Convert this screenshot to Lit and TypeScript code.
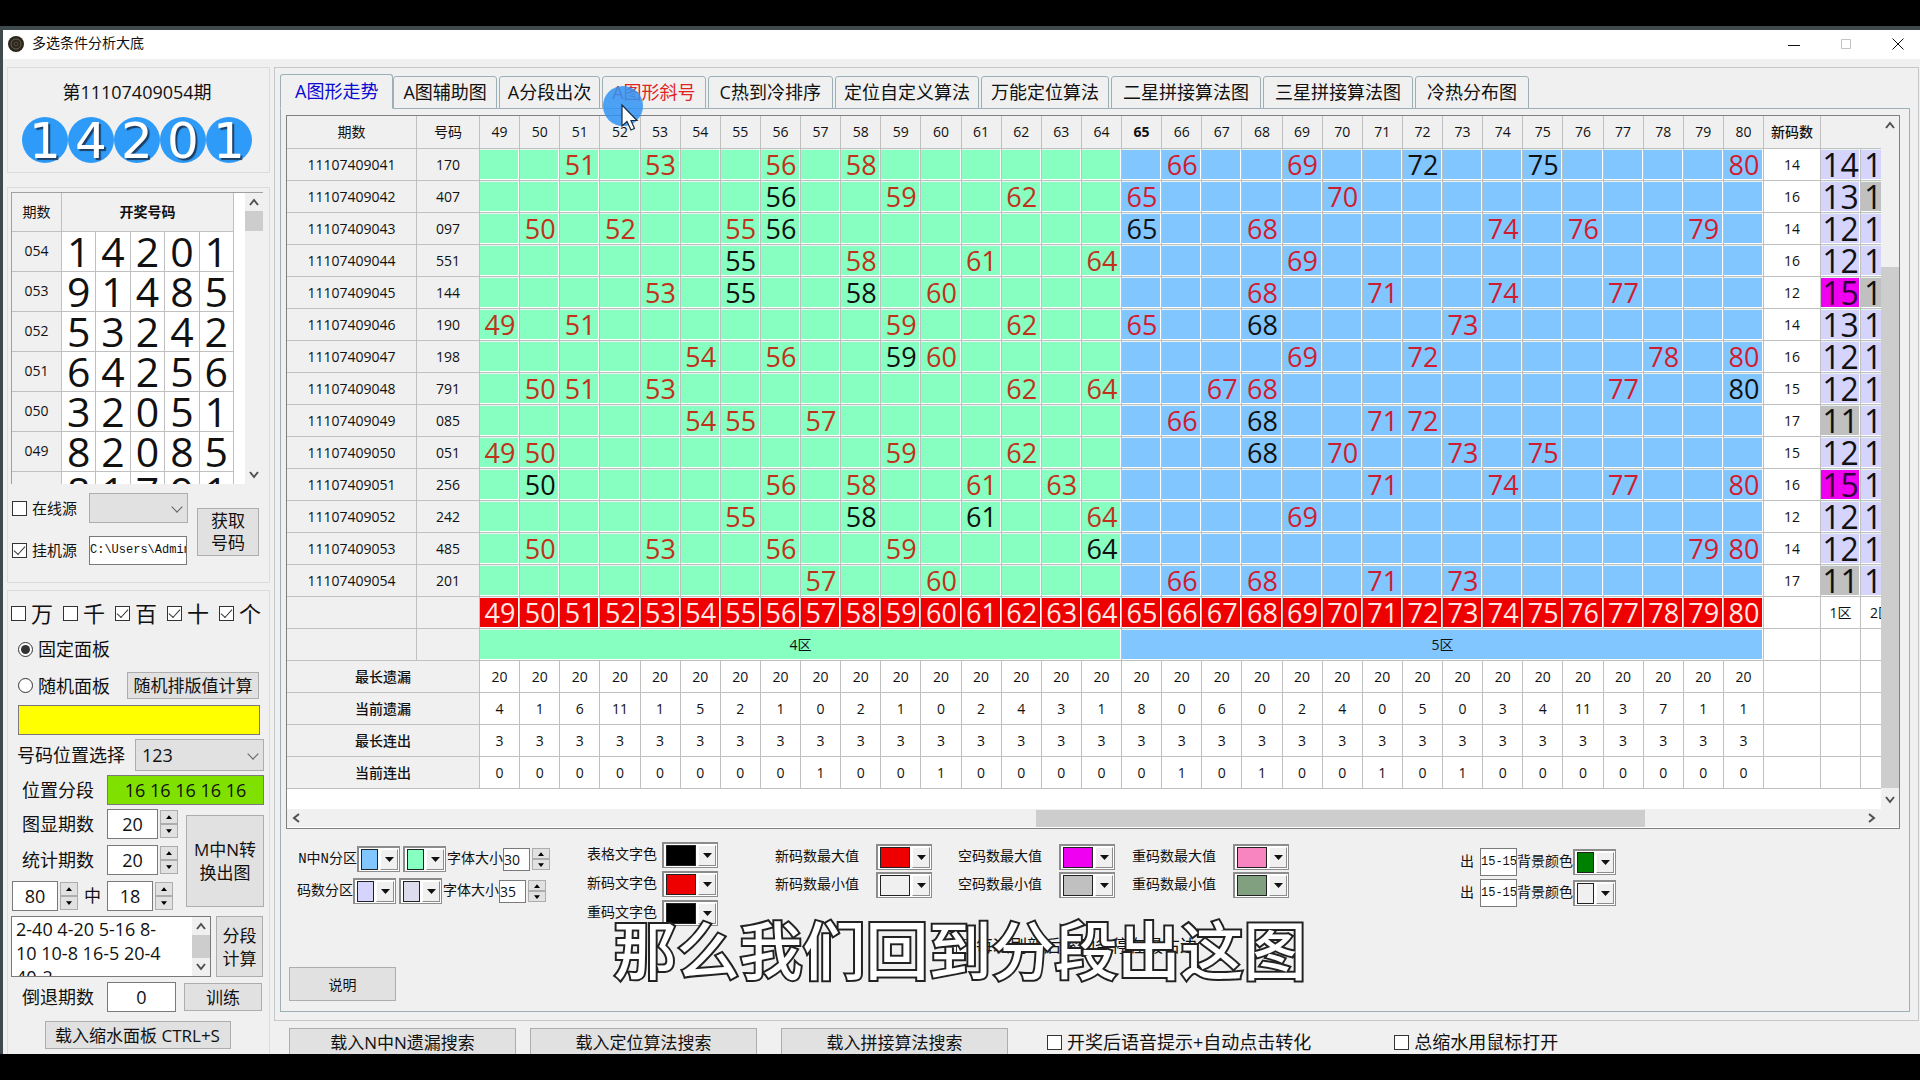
import { LitElement, html, css, svg, nothing } from "lit";
import { customElement } from "lit/decorators.js";

type Row = { id: string; code: string; hit: number[]; repeat: number[]; fresh: number; z1: number; z2low?: boolean };

const FIRST = 49;
const COLUMNS = Array.from({ length: 32 }, (_, i) => FIRST + i);

const ROWS: Row[] = [
  { id: "11107409041", code: "170", hit: [51, 53, 56, 58, 66, 69, 80], repeat: [72, 75], fresh: 14, z1: 14 },
  { id: "11107409042", code: "407", hit: [59, 62, 65, 70], repeat: [56], fresh: 16, z1: 13, z2low: true },
  { id: "11107409043", code: "097", hit: [50, 52, 55, 68, 74, 76, 79], repeat: [56, 65], fresh: 14, z1: 12 },
  { id: "11107409044", code: "551", hit: [58, 61, 64, 69], repeat: [55], fresh: 16, z1: 12 },
  { id: "11107409045", code: "144", hit: [53, 60, 68, 71, 74, 77], repeat: [55, 58], fresh: 12, z1: 15, z2low: true },
  { id: "11107409046", code: "190", hit: [49, 51, 59, 62, 65, 73], repeat: [68], fresh: 14, z1: 13 },
  { id: "11107409047", code: "198", hit: [54, 56, 60, 69, 72, 78, 80], repeat: [59], fresh: 16, z1: 12 },
  { id: "11107409048", code: "791", hit: [50, 51, 53, 62, 64, 67, 68, 77], repeat: [80], fresh: 15, z1: 12 },
  { id: "11107409049", code: "085", hit: [54, 55, 57, 66, 71, 72], repeat: [68], fresh: 17, z1: 11 },
  { id: "11107409050", code: "051", hit: [49, 50, 59, 62, 70, 73, 75], repeat: [68], fresh: 15, z1: 12 },
  { id: "11107409051", code: "256", hit: [56, 58, 61, 63, 71, 74, 77, 80], repeat: [50], fresh: 16, z1: 15 },
  { id: "11107409052", code: "242", hit: [55, 64, 69], repeat: [58, 61], fresh: 12, z1: 12 },
  { id: "11107409053", code: "485", hit: [50, 53, 56, 59, 79, 80], repeat: [64], fresh: 14, z1: 12 },
  { id: "11107409054", code: "201", hit: [57, 60, 66, 68, 71, 73], repeat: [], fresh: 17, z1: 11 },
];

const STATS: [string, number[]][] = [
  ["最长遗漏", COLUMNS.map(() => 20)],
  ["当前遗漏", [4, 1, 6, 11, 1, 5, 2, 1, 0, 2, 1, 0, 2, 4, 3, 1, 8, 0, 6, 0, 2, 4, 0, 5, 0, 3, 4, 11, 3, 7, 1, 1]],
  ["最长连出", COLUMNS.map(() => 3)],
  ["当前连出", COLUMNS.map((n) => ([57, 60, 66, 68, 71, 73].includes(n) ? 1 : 0))],
];

const HISTORY: [string, string][] = [
  ["054", "14201"],
  ["053", "91485"],
  ["052", "53242"],
  ["051", "64256"],
  ["050", "32051"],
  ["049", "82085"],
  ["048", "81791"],
];

const TABS: [string, string][] = [
  ["A图形走势", "on"],
  ["A图辅助图", ""],
  ["A分段出次", "snug"],
  ["A图形斜号", "hot"],
  ["C热到冷排序", "roomy"],
  ["定位自定义算法", "snug"],
  ["万能定位算法", ""],
  ["二星拼接算法图", "roomy"],
  ["三星拼接算法图", "roomy"],
  ["冷热分布图", "roomy"],
];

const LIMITS: [string, string, string][][] = [
  [["new-max", "新码数最大值", "#ee0000"], ["new-min", "新码数最小值", "#f0f0f0"]],
  [["gap-max", "空码数最大值", "#f000f0"], ["gap-min", "空码数最小值", "#c0c0c0"]],
  [["rep-max", "重码数最大值", "#f884c0"], ["rep-min", "重码数最小值", "#80a080"]],
];

const CHEVRONS: Record<string, string> = {
  up: "M4 11 L8 6 L12 11",
  down: "M4 5 L8 10 L12 5",
  left: "M10 4 L5 8 L10 12",
  right: "M6 4 L11 8 L6 12",
};

const chevron = (dir: string) => html`
  <svg class="chev" viewBox="0 0 16 16" aria-hidden="true">${svg`<path d=${CHEVRONS[dir]} />`}</svg>
`;

const spin = (name: string) => html`
  <span class="spin">
    <button aria-label="${name} 增加"><svg viewBox="0 0 8 5"><path d="M4 0 L8 5 H0 Z" /></svg></button>
    <button aria-label="${name} 减少"><svg viewBox="0 0 8 5"><path d="M0 0 H8 L4 5 Z" /></svg></button>
  </span>
`;

const colour = (id: string, value: string, name: string, wide = false) => html`
  <span class="colour ${wide ? "wide" : ""}">
    <span class="swatch" style="background:${value}"></span>
    <select id=${id} aria-label=${name}><option></option></select>
  </span>
`;

@customElement("app-root")
export class AppRoot extends LitElement {
  static styles = css`
    :host {
      display: flex;
      flex-direction: column;
      position: relative;
      height: 100vh;
      padding: 26px 0;
      overflow: hidden;
      box-sizing: border-box;
      background: #000;
      color: #111;
      font: 18px/24px "Open Sans", "Noto Sans CJK SC", sans-serif;
    }
    * { box-sizing: border-box; }
    button, input, select, textarea { font: inherit; color: inherit; margin: 0; border-radius: 0; }
    button { background: #e1e1e1; border: 1px solid #adadad; padding: 0; line-height: 23px; white-space: nowrap; }
    input, textarea { background: #fff; border: 1px solid #7a7a7a; padding: 0; outline: 0; min-width: 0; }

    .desktop { flex: 1; min-height: 0; background: #3f4a4e; padding: 4px 0 0 3px; display: flex; }
    .window { flex: 1; min-width: 0; background: #f0f0f0; display: flex; flex-direction: column; overflow: hidden; }
    .title { flex: none; height: 29px; background: #fff; display: flex; align-items: center; padding: 0 0 2px 5px; gap: 8px; font-size: 14px; }
    .title h1 { font: inherit; margin: 0; flex: 1; padding-bottom: 1px; }
    .logo { width: 16px; height: 16px; }
    .winbtn { background: none; border: 0; width: 44px; height: 24px; display: grid; place-items: center; }
    .winbtn svg { width: 12px; height: 12px; fill: none; stroke: #111; }
    .winbtn.off svg { stroke: #c4c4c4; }

    .body { flex: 1; min-height: 0; display: grid; grid-template-columns: 263px minmax(0, 1fr); gap: 4px; padding: 8px 1px 0 4px; }
    .side { display: flex; flex-direction: column; }
    .box { border: 1px solid #dcdcdc; }

    .draw { height: 106px; margin-bottom: 14px; padding: 13px 3px 0 0; text-align: center; }
    .draw p { margin: 0 0 13px; line-height: 23px; }
    .balls { display: flex; justify-content: center; }
    .ball { width: 46px; height: 46px; border-radius: 50%; background: #2f9bf8; color: #fff; font: 50px/48px "DejaVu Sans", sans-serif; text-shadow: 2px 2px 1px #1c3f66; }

    .source { height: 396px; margin-bottom: 7px; padding: 4px 3px; }
    .history { height: 292px; margin-right: 3px; border: 1px solid #a0a0a0; border-width: 1px 0 0 1px; background: #fff; display: flex; justify-content: space-between; overflow: hidden; }
    table { border-collapse: separate; border-spacing: 0; table-layout: fixed; }
    th, td { padding: 0; text-align: center; font-weight: 400; border: 1px solid #c0c0c0; border-width: 0 1px 1px 0; white-space: nowrap; }
    th { background: #f0f0f0; }
    .history table { width: 222px; font-size: 14px; }
    .history .idcol { width: 50px; }
    .history thead th { height: 39px; }
    .history .bold { font-weight: 700; }
    .history tbody th, .history td { height: 40px; }
    .history tbody th { padding-bottom: 2px; }
    .history td { font-size: 41px; line-height: 39px; }

    .bar { background: #f0f0f0; display: flex; flex-direction: column; align-items: center; width: 18px; }
    .bar.flat { flex-direction: row; width: auto; height: 18px; }
    .chev { width: 16px; height: 18px; fill: none; stroke: #505050; stroke-width: 2; flex: none; }
    .thumb { background: #cdcdcd; width: 18px; }
    .bar.flat .thumb { height: 17px; }

    .feed { display: grid; grid-template-columns: 77px 98px 62px; grid-template-rows: 30px 30px; row-gap: 12px; padding: 9px 0 0 1px; align-items: center; }
    .feed button { grid-area: 1 / 3 / 3 / 4; justify-self: end; width: 62px; height: 48px; margin-top: 6px; margin-right: -10px; white-space: normal; line-height: 22px; font-size: 17px; padding: 0 12px; }
    .feed label { font-size: 15px; }
    .feed .path { font: 12px/28px "Liberation Mono", monospace; height: 29px; width: 98px; }
    .tick { display: flex; align-items: center; gap: 5px; white-space: nowrap; }
    .tick input { appearance: none; width: 15px; height: 15px; flex: none; border: 1px solid #333; background: #fff; display: grid; place-items: center; }
    .tick input[type="radio"] { border-radius: 50%; }
    .tick input[type="checkbox"]:checked::before { content: ""; width: 10px; height: 5px; margin-top: -3px; border: solid #333; border-width: 0 0 1px 1px; transform: rotate(-48deg); }
    .tick input[type="radio"]:checked::before { content: ""; width: 9px; height: 9px; border-radius: 50%; background: #333; }

    .drop { position: relative; display: block; }
    .drop select { appearance: none; width: 100%; height: 100%; background: #e1e1e1; border: 1px solid #adadad; padding: 0 6px; display: block; }
    .drop::after { content: ""; position: absolute; right: 7px; top: 50%; width: 7px; height: 7px; margin-top: -5px; border: solid #606060; border-width: 0 1px 1px 0; transform: rotate(45deg); pointer-events: none; }
    .feed .drop { width: 99px; height: 30px; }

    .panel { flex: 1 0 auto; padding: 7px 5px 0 3px; display: flex; flex-direction: column; }
    .digits { display: grid; grid-template-columns: repeat(5, 52px); height: 30px; font-size: 22px; }
    .mode { padding-left: 7px; margin-top: 9px; height: 24px; }
    .line { display: flex; align-items: center; }
    .modeline { margin-top: 11px; height: 27px; padding-left: 7px; justify-content: space-between; padding-right: 5px; }
    .modeline button { width: 132px; height: 27px; font-size: 17px; }
    .yellow { background: #ff0; height: 30px; margin: 6px 4px 0 7px; }
    .pos { margin-top: 4px; height: 32px; padding-left: 6px; gap: 10px; }
    .pos .drop { flex: 1; height: 32px; }
    .field { height: 30px; }
    .field > label { width: 96px; padding-left: 11px; flex: none; white-space: nowrap; }
    .seg { margin-top: 4px; }
    .seg input { flex: 1; height: 30px; background: #80e000; text-align: center; }
    .counts { display: flex; justify-content: space-between; margin-top: 4px; }
    .counts > div { display: grid; gap: 6px; }
    .counts > button { width: 78px; height: 92px; margin-top: 6px; line-height: 23px; font-size: 17px; }
    .num { width: 51px; height: 30px; text-align: center; }
    .pair .num { width: 46px; }
    .pair { padding-left: 1px; }
    .field > .mid { width: 29px; padding: 0; text-align: center; font-size: 17px; }
    .spin { display: grid; grid-template-rows: 1fr 1fr; width: 18px; height: 28px; margin-left: 2px; }
    .spin button { display: grid; place-items: center; min-height: 0; }
    .spin svg { width: 6px; height: 4px; }
    .segments { display: flex; justify-content: space-between; margin-top: 5px; height: 61px; padding-right: 1px; }
    .memo { width: 200px; border: 1px solid #7a7a7a; display: flex; background: #fff; }
    .memo textarea { flex: 1; border: 0; resize: none; overflow: hidden; padding: 0 0 0 4px; height: 100%; white-space: pre; font-size: 18px; line-height: 24px; }
    .segments button { width: 47px; line-height: 23px; font-size: 17px; }
    .back { margin-top: 5px; }
    .back .num { width: 69px; }
    .back button { width: 78px; height: 28px; margin-left: 8px; font-size: 17px; }
    .load { align-self: center; width: 186px; height: 28px; margin-top: 9px; font-size: 17px; }

    .main { min-width: 0; display: flex; flex-direction: column; }
    .outer { height: 954px; flex: none; border-color: #c4c8c8; padding: 6px 8px 8px 5px; display: flex; flex-direction: column; }
    .tabs { display: flex; height: 35px; flex: none; align-items: flex-end; gap: 2px; position: relative; margin-bottom: -1px; }
    .tabs button { height: 33px; padding: 0 9px; background: #f0f0f0; border: 1px solid #9cb0b8; border-radius: 3px 3px 0 0; color: #111; }
    .tabs .on { height: 35px; padding: 0 14px; border-bottom-color: #f0f0f0; color: #0a0ad0; margin-right: -2px; }
    .tabs .hot { color: #e02424; }
    .tabs .roomy { padding: 0 11px; }
    .tabs .snug { padding: 0 8px; }
    .pane { flex: 1; border: 1px solid #9cb0b8; padding: 6px 9px 0 5px; }
    .sheet { height: 714px; border: 1px solid #808080; background: #fff; display: grid; grid-template-columns: minmax(0, 1fr) 18px; grid-template-rows: 693px 18px; }
    .view { overflow: hidden; }
    .sheet table { width: calc(100% + 20px); font-size: 14px; line-height: 20px; }
    .c-id { width: 130px; }
    .c-code { width: 63px; }
    .c-new { width: 57px; }
    .c-zone { width: 40px; }
    .sheet th, .sheet td { height: 32px; }
    .sheet thead th { height: 33px; padding-bottom: 1px; }
    .sheet .sel { font-weight: 700; }
    .sheet tr > .label { font-weight: 500; }
    .g, .b, .r, .lil, .gray, .mag { box-shadow: inset -1px -1px #fff, inset 0 1px #e8f4f0; }
    .sheet .g { background: #87ffc0; }
    .sheet .b { background: #82c6ff; }
    .sheet .r { background: #ee0000; color: #ffe8e4; }
    .sheet .lil { background: #d4d4fc; }
    .sheet .gray { background: #c0c0c0; }
    .sheet .mag { background: #f000f0; color: #30003c; }
    .sheet .n { font-size: 27px; line-height: 31px; padding-left: 1px; }
    .g.hit { color: #c0321c; }
    .b.hit { color: #d01c30; }
    .sheet .z { font-size: 32px; line-height: 31px; overflow: hidden; }
    .sheet .cut { text-align: left; padding-left: 3px; }
    .sheet .clip { text-align: left; padding-left: 9px; }
    .vbar { justify-content: space-between; }
    .vbar .thumb { height: 521px; margin-top: auto; margin-bottom: 3px; }
    .hbar { padding: 0 2px; }
    .hbar .thumb { width: 609px; margin-left: auto; margin-right: 218px; }

    .settings { display: flex; align-items: flex-start; height: 107px; padding-left: 11px; font: 14px/20px "Liberation Mono", "Noto Sans CJK SC", monospace; }
    .settings label { white-space: nowrap; flex: none; }
    .set { display: grid; flex: none; }
    .set .line { height: 26px; }
    .fonts { padding-top: 17px; gap: 6px; width: 254px; }
    .fonts .line:first-child { padding-left: 4px; }
    .fonts label { width: 56px; display: flex; justify-content: flex-end; }
    .fonts .colour + .colour { margin-left: 3px; }
    .fonts .colour + label { margin-left: 1px; }
    .fonts input { width: 27px; height: 23px; font-family: "Open Sans", sans-serif; }
    .fonts .spin { height: 22px; }
    .texts { padding-top: 13px; margin-left: 36px; gap: 3px; }
    .texts .line { gap: 5px; }
    .limits { padding-top: 15px; gap: 2px; }
    .limits .line { gap: 17px; }
    .limits:nth-of-type(3) { margin-left: 57px; }
    .limits:nth-of-type(4) { margin-left: 26px; }
    .limits:nth-of-type(5) { margin-left: 17px; }
    .outs { padding-top: 20px; gap: 5px; margin-left: 171px; }
    .outs input { width: 37px; height: 28px; margin-left: 6px; font-size: 12px; }
    .colour { display: flex; width: 43px; height: 26px; border: 2px solid #8c8c8c; border-right-width: 1px; border-bottom-width: 1px; background: #fff; position: relative; padding: 1px; flex: none; }
    .colour.wide { width: 56px; }
    .swatch { flex: 1; border: 1px solid #222; margin: 0 2px 0 1px; }
    .colour select { appearance: none; width: 18px; border: 1px solid #fff; border-right-color: #8c8c8c; border-bottom-color: #8c8c8c; background: #f0f0f0; padding: 0; }
    .colour::after { content: ""; position: absolute; right: 5px; top: 9px; width: 9px; height: 5px; background: #111; clip-path: polygon(0 0, 100% 0, 50% 100%); pointer-events: none; }
    .keep { padding-left: 670px; height: 20px; font-size: 17px; line-height: 20px; }
    .help { display: block; width: 107px; height: 34px; margin: 11px 0 0 3px; font-size: 14px; }

    .tools { display: flex; padding: 7px 0 0 15px; flex: none; }
    .tools button { width: 227px; height: 28px; margin-right: 14px; font-size: 17px; line-height: 27px; flex: none; }
    .tools button:nth-of-type(2) { margin-right: 24px; }
    .tools button:nth-of-type(3) { margin-right: 39px; }
    .tools .tick { margin-right: 83px; height: 28px; }

    .pointer { position: absolute; left: 603px; top: 86px; width: 42px; height: 46px; }
    .caption { position: absolute; left: 0; right: 0; top: 905px; margin: 0; text-align: center; font: 500 63px/84px "Noto Sans CJK SC", sans-serif; color: #fff; -webkit-text-stroke: 4px #222; paint-order: stroke fill; pointer-events: none; }
  `;

  private tick(id: string, text: string, on = false) {
    return html`<span class="tick"><input type="checkbox" id=${id} ?checked=${on} /><label for=${id}>${text}</label></span>`;
  }

  private sidebar() {
    return html`
      <aside class="side">
        <section class="box draw">
          <p>第11107409054期</p>
          <div class="balls">${[..."14201"].map((d) => html`<span class="ball">${d}</span>`)}</div>
        </section>

        <section class="box source">
          <div class="history">
            <table>
              <thead>
                <tr><th class="idcol">期数</th><th class="bold" colspan="5">开奖号码</th></tr>
              </thead>
              <tbody>
                ${HISTORY.map(([id, code]) => html`<tr><th>${id}</th>${[...code].map((d) => html`<td>${d}</td>`)}</tr>`)}
              </tbody>
            </table>
            <div class="bar">${chevron("up")}<span class="thumb" style="height:20px"></span><span style="flex:1"></span>${chevron("down")}</div>
          </div>
          <div class="feed">
            ${this.tick("online", "在线源")}
            <span class="drop"><select aria-label="在线源"><option></option></select></span>
            ${this.tick("local", "挂机源", true)}
            <input class="path" aria-label="挂机源路径" value="C:\\Users\\Admin" />
            <button>获取号码</button>
          </div>
        </section>

        <section class="box panel">
          <div class="digits">
            ${this.tick("d5", "万")}${this.tick("d4", "千")}${this.tick("d3", "百", true)}${this.tick("d2", "十", true)}${this.tick("d1", "个", true)}
          </div>
          <span class="tick mode"><input type="radio" name="mode" id="fixed" checked /><label for="fixed">固定面板</label></span>
          <div class="line modeline">
            <span class="tick"><input type="radio" name="mode" id="random" /><label for="random">随机面板</label></span>
            <button>随机排版值计算</button>
          </div>
          <input class="yellow" aria-label="排版值" />
          <div class="line pos">
            <label for="pos">号码位置选择</label>
            <span class="drop"><select id="pos"><option>123</option></select></span>
          </div>
          <div class="line field seg"><label for="seg">位置分段</label><input id="seg" value="16 16 16 16 16" /></div>
          <div class="counts">
            <div>
              <div class="line field"><label for="shown">图显期数</label><input class="num" id="shown" value="20" />${spin("图显期数")}</div>
              <div class="line field"><label for="total">统计期数</label><input class="num" id="total" value="20" />${spin("统计期数")}</div>
              <div class="line field pair">
                <input class="num" aria-label="M" value="80" />${spin("M")}
                <label class="mid" for="n">中</label><input class="num" id="n" value="18" />${spin("N")}
              </div>
            </div>
            <button>M中N转<br />换出图</button>
          </div>
          <div class="segments">
            <div class="memo">
              <textarea aria-label="分段" .value=${"2-40 4-20 5-16 8-\n10 10-8 16-5 20-4\n40-2"}></textarea>
              <div class="bar">${chevron("up")}<span class="thumb" style="flex:1"></span>${chevron("down")}</div>
            </div>
            <button>分段<br />计算</button>
          </div>
          <div class="line field back"><label for="back">倒退期数</label><input class="num" id="back" value="0" /><button>训练</button></div>
          <button class="load">载入缩水面板 CTRL+S</button>
        </section>
      </aside>
    `;
  }

  private cell(row: Row, n: number) {
    const kind = row.hit.includes(n) ? "hit" : row.repeat.includes(n) ? "rep" : "";
    return html`<td class="n ${n < 65 ? "g" : "b"} ${kind}">${kind ? n : nothing}</td>`;
  }

  private sheet() {
    const zone = (v: number) => (v === 15 ? "mag" : v === 11 ? "gray" : "lil");
    return html`
      <div class="sheet">
        <div class="view">
          <table>
            <colgroup>
              <col class="c-id" /><col class="c-code" />${COLUMNS.map(() => html`<col />`)}<col class="c-new" /><col class="c-zone" /><col class="c-zone" />
            </colgroup>
            <thead>
              <tr>
                <th>期数</th><th>号码</th>
                ${COLUMNS.map((n) => html`<th class=${n === 65 ? "sel" : ""}>${n}</th>`)}
                <th class="label">新码数</th><th colspan="2"></th>
              </tr>
            </thead>
            <tbody>
              ${ROWS.map(
                (r) => html`<tr>
                  <th>${r.id}</th><th>${r.code}</th>
                  ${COLUMNS.map((n) => this.cell(r, n))}
                  <td>${r.fresh}</td><td class="z ${zone(r.z1)}">${r.z1}</td><td class="z cut ${r.z2low ? "gray" : "lil"}">1</td>
                </tr>`
              )}
              <tr>
                <th></th><th></th>
                ${COLUMNS.map((n) => html`<td class="n r">${n}</td>`)}
                <td></td><td>1区</td><td class="clip">2区</td>
              </tr>
              <tr>
                <th></th><th></th><td class="g" colspan="16">4区</td><td class="b" colspan="16">5区</td><td></td><td></td><td></td>
              </tr>
              ${STATS.map(
                ([name, values]) => html`<tr>
                  <th class="label" colspan="2">${name}</th>${values.map((v) => html`<td>${v}</td>`)}<td></td><td></td><td></td>
                </tr>`
              )}
            </tbody>
          </table>
        </div>
        <div class="bar vbar">${chevron("up")}<span class="thumb"></span>${chevron("down")}</div>
        <div class="bar flat hbar">${chevron("left")}<span class="thumb"></span>${chevron("right")}</div>
        <div class="bar"></div>
      </div>
    `;
  }

  private settings() {
    const fontLine = (id: string, name: string, a: string, b: string, size: string) => html`
      <div class="line">
        <label for="${id}-a">${name}</label>${colour(`${id}-a`, a, name)}${colour(`${id}-b`, b, name)}
        <label for="${id}-size">字体大小</label><input id="${id}-size" value=${size} />${spin("字体大小")}
      </div>
    `;
    const wideLine = ([id, name, value]: [string, string, string]) => html`
      <div class="line"><label for=${id}>${name}</label>${colour(id, value, name, true)}</div>
    `;
    const outLine = (id: string, value: string) => html`
      <div class="line">
        <label for="${id}-range">出</label><input id="${id}-range" value="15-15" />
        <label for=${id}>背景颜色</label>${colour(id, value, "背景颜色")}
      </div>
    `;
    return html`
      <div class="settings">
        <div class="set fonts">
          ${fontLine("zone", "N中N分区", "#82c6ff", "#87ffc0", "30")}${fontLine("count", "码数分区", "#d4d4fc", "#dcdcec", "35")}
        </div>
        <div class="set texts">
          ${wideLine(["t-grid", "表格文字色", "#000"])}${wideLine(["t-new", "新码文字色", "#ee0000"])}${wideLine(["t-rep", "重码文字色", "#000"])}
        </div>
        ${LIMITS.map((pair) => html`<div class="set limits">${pair.map(wideLine)}</div>`)}
        <div class="set outs">${outLine("out-a", "#008000")}${outLine("out-b", "#f0f0f0")}</div>
      </div>
      <div class="keep">${this.tick("keep", "每次刷新后滚动条停在最右边")}</div>
      <button class="help">说明</button>
    `;
  }

  render() {
    return html`
      <div class="desktop">
        <div class="window">
          <header class="title">
            <svg class="logo" viewBox="0 0 16 16" aria-hidden="true">
              <circle cx="8" cy="8" r="8" fill="#2a261c" />
              <circle cx="8" cy="8" r="5" fill="none" stroke="#6c6450" />
              <circle cx="8" cy="8" r="2" fill="none" stroke="#57503e" />
            </svg>
            <h1>多选条件分析大底</h1>
            <button class="winbtn" aria-label="最小化"><svg viewBox="0 0 12 12"><path d="M0 7.5 H12" /></svg></button>
            <button class="winbtn off" aria-label="最大化"><svg viewBox="0 0 12 12"><path d="M1.5 1.5 H10.5 V10.5 H1.5 Z" /></svg></button>
            <button class="winbtn" aria-label="关闭"><svg viewBox="0 0 12 12"><path d="M0.5 0.5 L11.5 11.5 M11.5 0.5 L0.5 11.5" /></svg></button>
          </header>
          <div class="body">
            ${this.sidebar()}
            <main class="main">
              <section class="box outer">
                <nav class="tabs">${TABS.map(([name, kind]) => html`<button class=${kind}>${name}</button>`)}</nav>
                <div class="pane">${this.sheet()}${this.settings()}</div>
              </section>
              <div class="tools">
                <button>载入N中N遗漏搜索</button><button>载入定位算法搜索</button><button>载入拼接算法搜索</button>
                ${this.tick("voice", "开奖后语音提示+自动点击转化")}${this.tick("mouse", "总缩水用鼠标打开")}
              </div>
            </main>
          </div>
        </div>
      </div>
      <p class="caption">那么我们回到分段出这图</p>
      <svg class="pointer" viewBox="0 0 42 46" aria-hidden="true">
        <circle cx="20" cy="20" r="20" fill="#2f93f4" fill-opacity="0.85" />
        <path d="M19 19 V40 L24 35.5 L28 44 L31.5 42.5 L28 34.5 H34 Z" fill="#fff" stroke="#1a2a40" stroke-width="1.2" />
      </svg>
    `;
  }
}
